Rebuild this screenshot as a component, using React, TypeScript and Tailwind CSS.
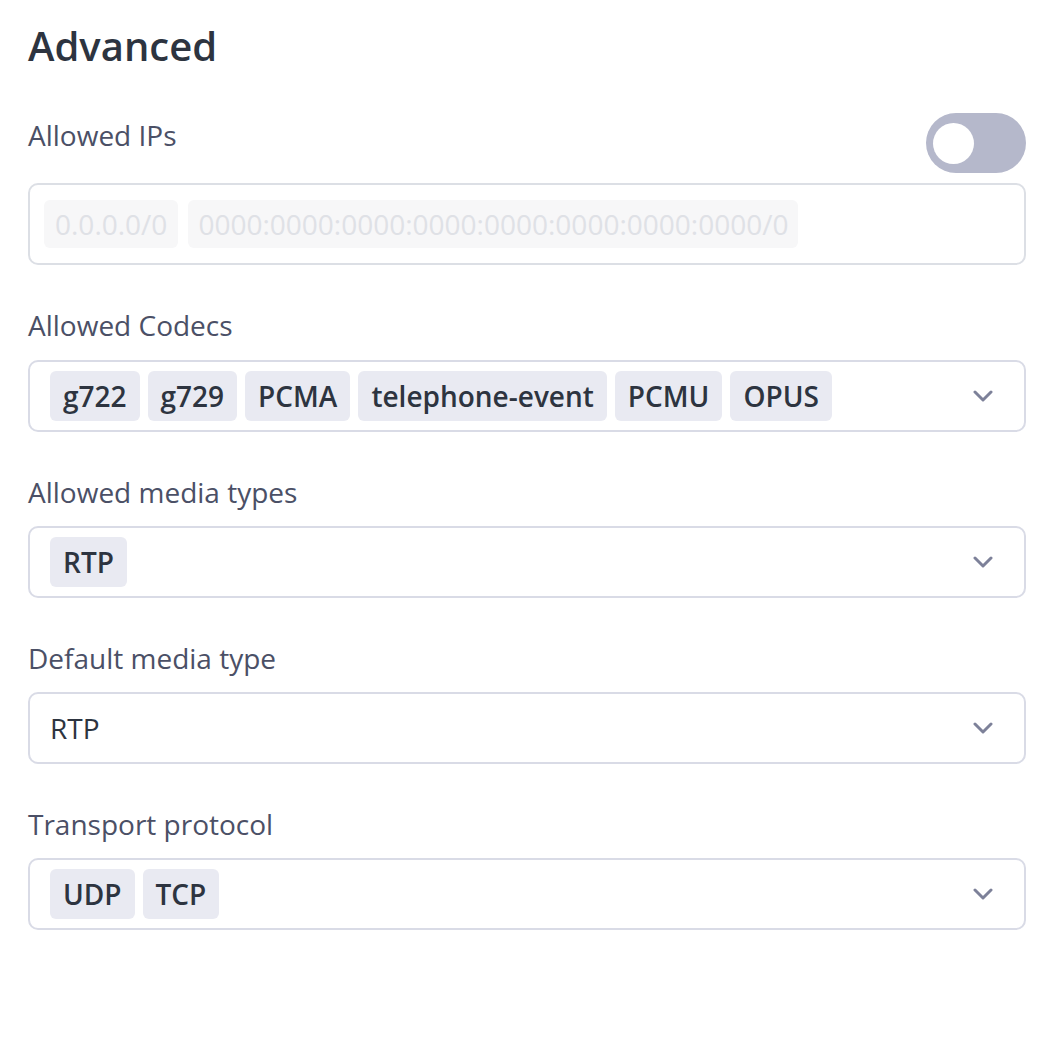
import React, { useState } from 'react';

const Chevron = () => (
  <svg width="20" height="12" viewBox="0 0 20 12" className="shrink-0">
    <path d="M2 2l8 8 8-8" fill="none" stroke="#7d8199" strokeWidth="3" strokeLinecap="round" strokeLinejoin="round" />
  </svg>
);

const Label = ({ children, className = '' }: { children: React.ReactNode; className?: string }) => (
  <div className={`text-[28px] leading-[40px] text-[#4b5066] ${className}`}>{children}</div>
);

const MultiSelect = ({ items }: { items: string[] }) => (
  <div className="h-[72px] border-2 border-[#d9dbe6] rounded-[10px] pl-[20px] pr-[31px] flex items-center justify-between">
    <div className="flex gap-2">
      {items.map(item => <span key={item} className="h-[50px] px-[13px] flex items-center rounded-[6px] bg-[#e9eaf2] text-[28px] font-semibold text-[#2d3440]">
          {item}
        </span>)}
    </div>
    <Chevron />
  </div>
);

const App = () => {
  const [allowIps, setAllowIps] = useState(false);
  return <div className="px-[28px] pt-[22px] pb-10 bg-white min-h-[1038px]" style={{ fontFamily: '"Open Sans", "Noto Sans", sans-serif' }}>
      <h1 className="text-[40px] leading-[48px] font-semibold text-[#2d3440]">Advanced</h1>
      {/* Allowed IPs */}
      <div className="mt-[43px] flex justify-between items-start">
        <Label className="mt-[2px]">Allowed IPs</Label>
        <button onClick={() => setAllowIps(!allowIps)} className={`w-[100px] h-[60px] rounded-full flex items-center px-[7px] ${allowIps ? 'bg-[#5b61d6] justify-end' : 'bg-[#b5b8cb] justify-start'}`}>
          <span className="w-[41px] h-[41px] rounded-full bg-white" />
        </button>
      </div>
      <div className="mt-[10px] h-[82px] border-2 border-[#dcdfe5] rounded-[10px] px-[14px] flex items-center gap-[10px]">
        <span className="h-[48px] px-[11px] flex items-center rounded-[6px] bg-[#f7f7f8] text-[28px] text-[#dfe1e6]">0.0.0.0/0</span>
        <span className="h-[48px] px-[10px] flex items-center rounded-[6px] bg-[#f7f7f8] text-[28px] text-[#dfe1e6]">0000:0000:0000:0000:0000:0000:0000:0000/0</span>
      </div>
      {/* Allowed Codecs */}
      <Label className="mt-10">Allowed Codecs</Label>
      <div className="mt-[15px]">
        <MultiSelect items={['g722', 'g729', 'PCMA', 'telephone-event', 'PCMU', 'OPUS']} />
      </div>
      {/* Allowed media types */}
      <Label className="mt-10">Allowed media types</Label>
      <div className="mt-[14px]">
        <MultiSelect items={['RTP']} />
      </div>
      {/* Default media type */}
      <Label className="mt-10">Default media type</Label>
      <div className="mt-[14px] h-[72px] border-2 border-[#d9dbe6] rounded-[10px] pl-[20px] pr-[31px] flex items-center justify-between">
        <span className="text-[28px] text-[#2d3440]">RTP</span>
        <Chevron />
      </div>
      {/* Transport protocol */}
      <Label className="mt-10">Transport protocol</Label>
      <div className="mt-[14px]">
        <MultiSelect items={['UDP', 'TCP']} />
      </div>
    </div>;
};

export default App;
